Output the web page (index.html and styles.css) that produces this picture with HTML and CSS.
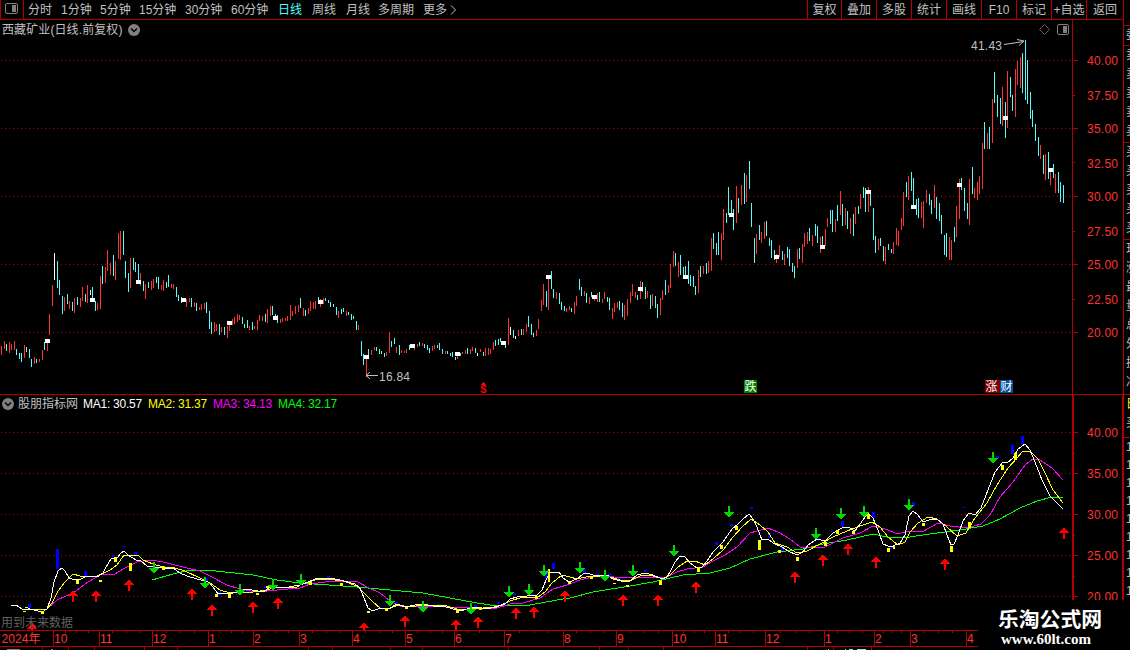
FILE: index.html
```html
<!DOCTYPE html>
<html lang="zh-CN">

<head>
    <meta charset="UTF-8">
    <meta name="viewport" content="width=device-width, initial-scale=1.0">
    <title>西藏矿业 日线</title>
    <link rel="stylesheet" href="styles.css">
</head>

<body>
    <div class="app">
        <div class="workspace">
            <div class="toolbar">
                <div class="layout-btn">
                    <svg width="13" height="11" viewBox="0 0 13 11"><rect x="0.5" y="0.5" width="12" height="10" rx="1.5" fill="none" stroke="#808080"/><rect x="7" y="2" width="4" height="7" fill="#808080"/></svg>
                </div>
                <div class="periods">
                    <span>分时</span>
                    <span>1分钟</span>
                    <span>5分钟</span>
                    <span>15分钟</span>
                    <span>30分钟</span>
                    <span>60分钟</span>
                    <span class="active">日线</span>
                    <span>周线</span>
                    <span>月线</span>
                    <span>多周期</span>
                    <span>更多</span>
                    <svg width="7" height="10" viewBox="0 0 7 10"><path d="M1 0.5L5.5 5L1 9.5" fill="none" stroke="#c0c0c0"/></svg>
                </div>
                <div class="tools">
                    <span>复权</span>
                    <span>叠加</span>
                    <span>多股</span>
                    <span>统计</span>
                    <span>画线</span>
                    <span>F10</span>
                    <span>标记</span>
                    <span>+自选</span>
                    <span>返回</span>
                </div>
            </div>

            <div class="panel price">
                <svg id="priceChart" width="1123" height="374" viewBox="0 20 1123 374"></svg>
                <div class="caption">
                    <span>西藏矿业(日线.前复权)</span>
                    <svg class="fold" width="12" height="12" viewBox="0 0 12 12"><circle cx="6" cy="6" r="6" fill="#808080"/><path d="M3 4.5L6 7.5L9 4.5" fill="none" stroke="#000" stroke-width="1.5"/></svg>
                </div>
            </div>

            <div class="panel indicator">
                <svg id="maChart" width="1123" height="235" viewBox="0 395 1123 235"></svg>
                <div class="caption">
                    <svg class="fold" width="12" height="12" viewBox="0 0 12 12"><circle cx="6" cy="6" r="6" fill="#808080"/><path d="M3 4.5L6 7.5L9 4.5" fill="none" stroke="#000" stroke-width="1.5"/></svg>
                    <span class="name">股朋指标网</span>
                    <span class="ma ma1">MA1: 30.57</span>
                    <span class="ma ma2">MA2: 31.37</span>
                    <span class="ma ma3">MA3: 34.13</span>
                    <span class="ma ma4">MA4: 32.17</span>
                </div>
                <div class="notice">用到未来数据</div>
            </div>

            <svg id="timeline" width="1123" height="20" viewBox="0 630 1123 20"></svg>
        </div>

        <div class="side">
            <div class="side-row h25"></div>
            <div class="side-row h20">委</div>
            <div class="side-row h97">卖卖卖卖卖</div>
            <div class="side-row h97">买买买买买</div>
            <div class="side-row h155">现涨最量总外换净</div>
            <div class="side-row h42"><b>日</b>买</div>
            <div class="side-row rest">111111111</div>
        </div>
    </div>

    <div class="watermark">
        <div class="site">乐淘公式网</div>
        <div class="url">www.60lt.com</div>
    </div>

    <script src="script.js"></script>
</body>

</html>
```
FILE: styles.css
```css
* {
    box-sizing: border-box;
}

body {
    margin: 0;
    width: 1130px;
    height: 650px;
    overflow: hidden;
    background-color: #000;
    color: #c0c0c0;
    font-family: "Liberation Sans", "Noto Sans CJK SC", sans-serif;
    font-size: 12px;
    line-height: 14px;
}

svg {
    display: block;
    flex: none;
}

.app {
    display: flex;
    height: 650px;
}

.workspace {
    width: 1124px;
    border-right: 1px solid #b00000;
    flex: none;
}

/* top toolbar */
.toolbar {
    display: flex;
    height: 20px;
    border-left: 1px solid #b00000;
    border-bottom: 1px solid #b00000;
}

.layout-btn {
    width: 23px;
    padding: 3px 0 0 4px;
    border-right: 1px solid #b00000;
}

.periods {
    display: grid;
    grid-template-columns: 33px 39px 39px 46px 46px 47px 34px 34px 32px 45px 27px 8px;
    align-items: center;
    padding-left: 4px;
    white-space: nowrap;
}

.periods .active {
    color: #54fcfc;
}

.tools {
    display: grid;
    grid-template-columns: 34px 35px 35px 35px 35px 35px 35px 35px 37px;
    margin-left: auto;
    white-space: nowrap;
}

.tools span {
    border-left: 1px solid #b00000;
    display: flex;
    align-items: center;
    justify-content: center;
}

/* chart panels */
.panel {
    position: relative;
}

.price {
    height: 375px;
    border-bottom: 1px solid #b00000;
}

.indicator {
    height: 235px;
}

.caption {
    position: absolute;
    left: 2px;
    top: 2px;
    display: flex;
    align-items: center;
    white-space: nowrap;
}

.caption span {
    padding-top: 1px;
}

.price .fold {
    margin-left: 4px;
}

.price .caption span {
    width: 122px;
    letter-spacing: 0.1px;
}

.indicator .caption {
    top: 1px;
}

.name {
    width: 60px;
    margin: 0 5px 0 4px;
}

.ma {
    width: 65px;
    letter-spacing: -0.25px;
}

.ma1 {
    color: #fff;
}

.ma2 {
    color: #ff0;
}

.ma3 {
    color: #f0f;
}

.ma4 {
    color: #0f0;
}

.notice {
    position: absolute;
    left: 1px;
    bottom: 0;
    color: #606060;
}

text {
    font-size: 12px;
}

.axis-label {
    fill: #ff3232;
}

.mark-label {
    fill: #c0c0c0;
}

.crisp {
    shape-rendering: crispEdges;
}

.ma-line {
    fill: none;
    stroke-width: 1;
    shape-rendering: crispEdges;
}

/* clipped quote column */
.side {
    width: 6px;
    overflow: hidden;
}

.side-row {
    width: 20px;
    padding-left: 2px;
    overflow: hidden;
    border-bottom: 1px solid #b00000;
    line-height: 19px;
    word-break: break-all;
    padding-right: 5px;
}

.side-row b {
    color: #ff0;
    font-weight: normal;
}

.h25 {
    height: 26px;
}

.h20 {
    height: 20px;
}

.h97 {
    height: 97px;
}

.h155 {
    height: 155px;
}

.h42 {
    height: 43px;
}

.rest {
    border: none;
    line-height: 18px;
    padding-right: 10px;
}

/* site mark over the corner */
.watermark {
    position: absolute;
    left: 978px;
    top: 600px;
    width: 152px;
    height: 50px;
    padding: 6px 0 0 20px;
    background-color: #000;
    color: #fff;
    font-weight: bold;
    white-space: nowrap;
}

.site {
    font-family: "Noto Sans CJK SC", sans-serif;
    font-size: 20.8px;
    line-height: 24px;
}

.url {
    padding: 1px 0 0 3px;
    font-family: "Liberation Serif", serif;
    font-size: 15px;
    line-height: 16px;
}
```
FILE: script.js
```javascript
const RED = "#ff3232";
const CYAN = "#54fcfc";
const LINE = "#b00000";
const barColor = { r: RED, c: CYAN, w: "#ffffff" };

// x high low colour
const bars = `1 346 355 r,4 341 349 r,6 344 351 c,9 342 353 r,11 344 350 r,14 341 350 r,16 349 355 c,19 353 359 c,21 353 362 c,24 345 358 r,26 347 352 c,29 349 358 c,31 359 367 c,34 357 364 r,36 359 363 c,39 359 362 r,42 350 360 r,44 342 350 c,47 341 351 r,49 314 335 r,
52 285 306 r,54 253 280 w,57 261 288 c,59 280 295 c,62 296 314 c,64 297 311 r,67 294 304 c,69 301 309 r,72 302 311 c,74 298 313 r,77 297 305 c,80 298 307 r,82 287 301 r,85 294 302 c,87 285 303 r,90 290 295 w,92 287 300 c,95 301 311 c,97 303 310 r,100 276 309 r,
102 266 284 c,105 267 283 r,107 250 271 r,110 263 275 r,113 255 276 c,115 261 280 r,118 233 259 r,120 231 260 r,123 231 255 c,125 261 278 c,128 273 292 c,130 258 288 r,133 258 270 c,135 262 272 c,138 264 280 c,140 273 286 r,143 281 291 c,145 284 299 r,148 282 288 c,
151 281 290 r,153 279 288 r,156 277 283 c,158 277 289 c,161 285 290 r,163 280 291 r,166 282 288 c,168 275 287 c,171 284 288 r,173 284 289 r,176 287 297 c,178 295 301 c,181 297 303 c,186 299 307 r,189 298 302 r,191 298 307 c,194 302 307 r,196 303 311 c,199 307 310 r,
201 304 310 r,204 303 309 r,206 302 313 c,209 311 329 c,211 322 334 c,214 322 332 r,216 324 331 r,219 324 335 c,221 327 332 r,224 327 335 c,227 326 338 r,229 321 331 r,232 319 325 r,234 317 324 r,237 314 322 r,239 315 320 r,242 317 324 c,244 324 328 c,247 320 328 c,
249 326 330 r,252 322 330 c,254 326 329 r,257 320 330 r,259 315 321 r,262 316 321 r,265 314 322 c,267 309 323 r,270 306 316 r,272 306 315 c,275 314 319 c,277 315 323 c,280 319 323 r,282 318 322 r,285 318 321 r,287 316 321 r,290 305 320 r,292 311 316 r,295 306 314 r,
298 305 312 r,300 298 308 c,303 308 316 r,305 310 316 c,308 308 314 r,310 301 311 r,313 302 309 r,315 301 309 r,318 297 301 c,320 299 307 r,323 298 304 r,325 298 301 c,328 300 303 c,330 302 307 c,333 304 307 c,336 307 315 c,338 311 318 r,341 309 314 c,343 308 312 c,
346 311 316 r,348 312 315 c,351 314 320 c,353 316 319 c,356 321 330 c,358 325 330 r,361 341 356 c,363 354 365 c,366 359 377 r,368 349 356 c,371 350 355 r,374 347 350 r,376 347 351 c,379 349 354 c,381 351 354 c,384 353 357 c,386 352 356 r,389 332 353 r,391 341 347 c,
394 338 344 c,396 347 353 r,399 345 355 c,401 350 353 r,404 351 353 r,406 349 353 r,409 345 350 c,414 347 350 r,417 344 347 r,419 342 346 c,422 343 346 r,424 344 348 c,427 345 350 c,429 348 353 c,432 346 351 r,434 345 349 r,437 345 348 c,439 343 350 c,442 349 354 c,
445 351 354 r,447 351 354 c,450 353 356 c,452 352 357 c,455 357 360 c,457 356 359 r,460 353 356 c,462 352 354 r,465 350 354 r,467 348 354 c,470 349 354 r,472 347 351 r,475 348 353 c,477 353 356 w,480 349 352 r,483 352 356 c,485 348 356 r,488 348 355 r,490 349 354 r,
493 342 350 r,495 340 346 c,498 339 345 c,500 338 342 c,505 344 348 c,508 318 345 r,510 327 335 w,513 330 338 c,515 336 339 w,518 330 336 r,521 329 335 c,523 329 335 r,526 324 332 r,528 316 327 c,531 324 335 c,533 333 337 c,536 330 336 r,538 319 329 r,541 300 311 r,
543 284 305 r,546 291 307 c,548 278 310 r,551 271 289 c,553 289 298 c,556 292 299 r,559 293 304 c,561 302 310 c,564 306 311 c,566 308 312 r,569 306 310 r,571 308 312 c,574 302 314 r,576 296 306 r,579 279 290 c,581 287 296 c,584 291 296 r,586 293 303 c,589 297 304 r,
591 292 297 c,594 299 301 r,597 293 302 r,599 292 302 c,602 299 303 r,604 292 299 r,607 297 302 c,609 298 310 c,612 308 319 r,614 303 312 r,617 302 308 r,619 301 310 c,622 303 317 c,624 305 320 r,627 299 316 r,630 292 303 r,632 284 296 r,635 292 298 r,637 295 300 c,
640 281 299 r,642 282 292 c,645 287 299 c,647 291 298 r,650 295 309 c,652 294 306 r,655 296 308 c,657 304 318 c,660 298 315 r,662 290 300 r,665 280 295 c,668 285 293 r,670 264 288 r,673 251 267 r,675 253 266 c,678 262 277 r,680 255 275 c,683 267 277 c,685 266 275 c,
688 261 284 c,690 275 286 c,693 276 287 c,695 286 295 c,698 270 293 r,700 266 277 c,703 266 274 r,706 263 274 c,708 261 273 r,711 238 271 r,713 233 249 c,716 243 255 c,718 232 255 c,721 233 260 r,723 209 240 r,726 213 223 c,728 187 215 c,731 200 213 c,733 209 230 c,
736 186 223 r,738 198 213 c,741 185 205 r,744 173 204 c,746 175 202 r,749 161 189 c,751 203 227 c,754 238 263 c,756 234 254 r,759 225 240 c,761 232 243 r,764 222 239 r,766 221 236 c,769 238 246 c,771 240 258 c,774 250 260 c,776 254 263 r,779 245 257 r,782 251 260 c,
784 254 265 r,787 247 258 c,789 249 266 c,792 263 272 c,794 266 278 c,797 249 268 r,799 248 259 c,802 244 263 r,804 233 247 r,807 232 244 r,809 228 241 c,812 235 246 r,815 224 236 c,817 226 243 c,820 237 253 r,822 236 245 c,825 229 246 r,827 218 227 r,830 210 224 c,
832 210 232 c,835 219 232 r,837 205 221 c,840 191 215 r,842 204 226 c,845 208 225 r,847 211 229 c,850 218 234 r,853 214 236 c,855 207 224 r,858 206 214 c,860 194 209 r,863 187 198 c,865 188 212 c,868 187 212 r,870 192 206 c,873 208 240 c,875 236 253 c,878 239 250 r,
880 238 246 c,883 246 261 c,885 247 264 r,888 244 250 c,891 249 253 c,893 242 254 r,896 228 245 r,898 231 246 r,901 218 230 r,903 192 226 r,906 182 197 c,908 176 200 r,911 172 191 c,913 178 205 c,916 199 215 c,918 198 218 c,921 202 218 r,923 201 228 r,926 190 203 r,
929 194 205 c,931 200 214 c,934 185 208 r,936 197 219 c,939 203 221 c,941 215 234 c,944 235 255 c,946 233 257 c,949 237 260 r,951 240 260 r,954 227 242 c,956 206 237 r,959 179 219 r,961 178 190 c,964 188 211 c,967 203 219 c,969 179 225 r,972 167 194 c,974 188 198 r,
977 182 200 r,979 176 194 r,982 143 189 r,984 122 149 c,987 133 149 r,989 127 149 c,992 99 143 r,994 72 103 c,997 95 117 c,1000 98 124 c,1002 87 126 r,1005 102 138 c,1007 71 128 r,1010 77 97 c,1012 95 111 c,1015 69 117 r,1017 61 85 r,1020 57 88 r,1022 53 93 c,
1025 40 100 c,1027 60 104 c,1030 92 119 c,1032 110 127 c,1035 124 141 c,1038 137 156 c,1040 145 159 r,1043 155 174 c,1045 154 180 r,1048 152 179 c,1050 172 185 r,1053 164 178 c,1055 174 193 r,1058 172 193 c,1060 182 202 c,1063 185 203 c`;

// white squares on every 18th bar
const squares = [[45, 339], [90, 298], [136, 280], [181, 298], [227, 321], [273, 316], [318, 300], [364, 355], [410, 344], [455, 352], [501, 341], [546, 275],
    [592, 295], [638, 287], [683, 275], [729, 213], [774, 255], [820, 245], [866, 190], [911, 205], [957, 183], [1003, 116], [1048, 168]];

const maLines = [
    ["#00ff00", "152,580 173,574 190,570 207,570 253,575 277,580 300,583 357,587 390,590 423,593 450,598 477,603 497,606 530,605 557,600 570,598 593,592 630,586 653,582 683,575 710,573 730,568 750,559 777,552 803,549 823,544 847,540 873,534 887,537 903,538 930,534 960,530 983,526 1000,519 1020,508 1037,501 1052,497 1063,497"],
    ["#ff00ff", "48,608 57,600 73,593 88,582 100,575 115,574 125,568 137,562 150,560 163,562 187,568 200,571 210,576 227,585 240,589 257,592 277,590 300,588 310,584 333,581 358,582 367,587 380,593 390,601 400,606 423,606 477,608 497,608 510,604 523,603 540,598 553,589 567,585 580,580 597,576 630,578 667,577 677,572 687,569 703,567 713,561 725,555 737,547 750,533 768,528 778,532 790,539 800,547 825,547 843,538 860,533 873,526 885,529 898,534 908,531 922,532 938,523 950,526 967,528 981,524 990,515 1000,497 1013,482 1025,465 1033,459 1040,460 1052,468 1063,480"],
    ["#ffff00", "25,607 33,610 47,609 52,603 58,591 65,582 73,574 80,576 97,576 110,570 117,565 124,555 138,555 143,560 153,564 163,567 175,568 185,571 200,578 210,583 220,590 230,593 240,592 253,592 267,590 277,587 297,587 300,585 315,580 327,579 343,581 357,586 365,594 373,602 380,608 388,609 398,605 410,607 423,605 447,606 457,609 470,609 497,607 510,601 523,597 537,598 545,592 552,583 562,575 570,577 577,579 590,576 607,576 620,580 632,580 642,575 653,576 663,579 670,575 678,567 687,561 695,561 705,565 713,559 723,550 733,537 742,527 751,519 760,525 768,532 775,543 787,547 797,553 807,551 820,544 833,537 847,531 860,526 872,522 880,527 888,537 898,545 905,542 910,532 918,523 928,517 937,519 947,527 957,536 966,533 975,518 987,503 997,485 1008,468 1017,458 1023,451 1030,451 1038,459 1045,473 1053,490 1063,503"],
    ["#ffffff", "11,605 16,605 22,609 30,609 42,612 47,609 51,598 54,582 58,571 62,568 65,571 69,578 75,580 81,579 87,576 99,576 103,573 106,567 111,559 117,558 121,553 124,551 128,555 136,560 140,560 147,566 153,567 163,568 173,568 180,573 187,576 197,579 208,582 213,587 218,594 233,593 247,589 263,592 270,587 283,588 300,585 308,582 318,578 330,578 340,580 355,584 360,588 364,598 368,608 372,611 378,609 390,608 397,604 405,607 415,605 423,604 433,606 443,606 453,609 460,611 467,609 477,607 487,609 498,606 505,604 510,599 517,597 537,595 542,590 546,580 550,573 554,572 559,572 563,578 569,582 577,579 583,574 588,573 595,576 607,575 613,579 625,582 630,581 637,575 645,573 653,575 662,579 667,577 671,570 675,562 680,556 685,557 690,563 697,568 702,567 707,561 713,552 723,542 732,529 738,524 743,519 749,514 753,519 757,527 762,540 768,539 773,543 782,547 788,551 797,555 803,552 808,545 817,539 825,541 833,533 842,528 848,527 855,531 863,520 868,513 873,518 878,530 883,544 888,546 893,546 900,543 905,535 909,516 913,511 918,515 923,522 932,519 938,520 943,524 947,535 951,545 954,544 958,535 963,521 969,513 975,515 981,508 988,490 995,472 1003,462 1007,463 1013,458 1018,449 1025,444 1030,450 1035,462 1042,480 1050,496 1063,509"]
];

// x y w h
const blueBlocks = "56 549 3 20,28 604 3 4,84 571 3 5,112 555 3 2,122 546 3 1,134 552 3 4,157 564 3 2,167 566 3 3,205 578 3 4,218 591 3 4,249 591 3 2,264 586 3 2,327 576 3 2,378 606 3 2,395 602 3 2,438 604 3 2,474 605 3 2,497 602 3 2,504 602 3 2,513 593 3 2,531 594 3 2,545 570 3 10,552 563 3 6,583 569 3 4,596 574 3 2,608 574 3 2,618 578 3 3,644 570 3 2,679 555 3 1,715 542 3 3,730 524 3 2,750 507 3 2,760 540 3 1,768 533 3 5,781 546 3 5,817 538 3 1,831 530 3 1,841 521 3 6,872 512 3 6,890 546 3 3,912 502 3 4,930 516 3 2,963 507 3 1,996 456 3 3,1011 445 3 9,1021 436 3 8";
const yellowBlocks = "23 611 3 1,41 611 3 3,76 580 3 4,99 580 3 2,114 557 3 5,129 563 3 8,162 566 3 4,215 594 3 3,228 594 3 4,256 593 3 2,266 586 3 2,309 582 3 3,340 583 3 3,367 611 3 2,385 608 3 3,405 607 3 2,456 610 3 3,479 607 3 3,535 596 3 3,548 569 2 13,568 582 3 2,590 576 3 3,613 583 3 1,626 585 3 2,659 580 3 5,697 567 3 5,720 545 3 4,735 526 3 4,758 540 3 10,778 550 3 3,796 557 3 4,824 542 3 4,836 530 3 4,852 531 3 3,867 514 3 5,887 548 3 4,893 546 2 3,922 523 3 3,950 546 3 6,968 522 3 6,1001 465 3 5,1014 453 3 7";

const buyArrows = [[32, 623], [73, 590], [96, 590], [129, 579], [192, 588], [212, 604], [253, 601], [278, 597], [364, 622], [405, 615], [456, 619], [478, 616], [516, 607], [534, 606], [565, 590], [623, 594], [658, 594], [696, 581], [795, 571], [823, 554], [848, 543], [876, 556], [945, 558], [1064, 527]];
const sellArrows = [[154, 562], [205, 577], [240, 584], [273, 579], [301, 574], [390, 595], [423, 601], [471, 603], [509, 586], [529, 584], [544, 565], [580, 562], [605, 570], [633, 565], [674, 545], [729, 506], [816, 528], [841, 508], [864, 506], [909, 499], [993, 452]];

const rect = (x, y, w, h, fill) => `<rect class="crisp" x="${x}" y="${y}" width="${w}" height="${h}" fill="${fill}"/>`;
const label = (x, y, t, w, cls) => `<text class="${cls}" x="${x}" y="${y}"${w ? ` textLength="${w}"` : ""}>${t}</text>`;
const grid = y => `<path class="crisp" d="M1 ${y + 0.5}H1072" stroke="${LINE}" stroke-dasharray="1 3"/>`;
const blocks = (list, fill) => list.split(",").map(b => rect(...b.split(" "), fill)).join("");

function drawPrice() {
    let out = "";
    [60, 128, 196, 264, 332].forEach(y => out += grid(y) + rect(1073, y, 5, 1, LINE));
    [95, 162, 231, 299].forEach(y => out += rect(1073, y, 2, 1, LINE));
    out += rect(1072, 20, 1, 374, LINE);
    const prices = ["40.00", "37.50", "35.00", "32.50", "30.00", "27.50", "25.00", "22.50", "20.00"];
    const rows = [65, 100, 133, 168, 201, 236, 269, 304, 337];
    prices.forEach((p, i) => out += label(1087, rows[i], p, 31, "axis-label"));

    bars.split(",").forEach(b => {
        const [x, top, bottom, c] = b.trim().split(" ");
        out += rect(x, top, 1, bottom - top, barColor[c]);
    });
    squares.forEach(([x, y]) => out += rect(x, y, 5, 4, "#fff"));

    // high and low marks
    out += label(971, 50, "41.43", 31, "mark-label");
    out += `<path d="M1004 44.5L1024 41.5M1017 39.5L1024 41L1019 45.5" fill="none" stroke="#c0c0c0"/>`;
    out += label(379, 381, "16.84", 31, "mark-label");
    out += `<path d="M378 375.5H366M370 372L366 375.5L370 379" fill="none" stroke="#c0c0c0"/>`;

    // event badges
    out += `<path class="crisp" d="M483 382h1v1h1v1h1v1h-5v-1h1v-1h1z" fill="#f00"/><text x="480" y="393" fill="#f00" style="font-size:10px;font-weight:bold">S</text>`;
    out += rect(744, 380, 13, 13, "#008000") + `<text x="744.5" y="391" fill="#fff">跌</text>`;
    out += rect(985, 380, 15, 13, "#800000") + rect(1000, 380, 13, 13, "#0050a0");
    out += `<text x="985.5" y="391" fill="#fff">涨</text><text x="1000.5" y="391" fill="#fff">财</text>`;

    out += `<path d="M1044.5 24.5L1049.5 29.5L1044.5 34.5L1039.5 29.5Z" fill="none" stroke="#606060"/>`;
    out += `<rect x="1057.5" y="24.5" width="11" height="10" rx="1.5" fill="none" stroke="#808080"/>` + rect(1063, 26, 4, 7, "#808080");
    document.getElementById("priceChart").innerHTML = out;
}

function drawIndicator() {
    let out = "";
    [432, 473, 514, 555, 596].forEach((y, i) => {
        out += grid(y) + rect(1074, y, 4, 1, LINE);
        out += label(1087, y + 5, ["40.00", "35.00", "30.00", "25.00", "20.00"][i], 31, "axis-label");
        if (i < 4) out += rect(1074, y + 21, 1, 1, LINE);
    });
    out += rect(1072, 395, 2, 235, LINE) + rect(1122, 395, 1, 235, LINE);

    out += blocks(blueBlocks, "#0000ff");
    maLines.forEach(([color, pts]) => out += `<polyline class="ma-line" points="${pts}" stroke="${color}"/>`);
    out += blocks(yellowBlocks, "#ffff00");
    buyArrows.forEach(([x, y]) => out += `<path class="crisp" d="M${x} ${y}l5 6h-4v6h-2v-6h-4z" fill="#ff0000"/>`);
    sellArrows.forEach(([x, y]) => out += `<path class="crisp" d="M${x - 1} ${y}h2v6h4l-5 6l-5 -6h4z" fill="#00d800"/>`);
    document.getElementById("maChart").innerHTML = out;
}

function drawTimeline() {
    const months = [[53, 10], [99, 11], [152, 12], [208, 1], [253, 2], [299, 3], [352, 4], [405, 5], [454, 6], [504, 7], [563, 8], [616, 9], [672, 10], [715, 11], [765, 12], [824, 1], [874, 2], [910, 3], [966, 4]];
    let out = rect(0, 630, 1123, 1, LINE) + rect(0, 646, 1123, 1, LINE) + label(1.5, 643, "2024年", 39, "axis-label");
    months.forEach(([x, m], i) => {
        out += rect(x, 630, 1, 16, LINE) + label(x + 1, 643, m, 0, "axis-label");
        const next = i < months.length - 1 ? months[i + 1][0] : x + 50;
        for (let k = 1; k < 4; k++) {
            out += rect(Math.round(x + (next - x) * k / 4), 631, 1, 2, LINE);
        }
    });
    [42, 68, 94, 144, 177, 308, 332, 390, 422, 508, 599, 628, 663, 807, 833, 871].forEach(x => out += rect(x, 647, 1, 3, LINE));
    out += rect(7, 649, 13, 1, "#808080") + rect(51, 649, 2, 1, "#808080");
    out += rect(828, 649, 1, 1, "#c0c0c0") + rect(845, 649, 1, 1, CYAN) + rect(849, 649, 4, 1, CYAN) + rect(857, 649, 9, 1, CYAN);
    document.getElementById("timeline").innerHTML = out;
}

drawPrice();
drawIndicator();
drawTimeline();
```
